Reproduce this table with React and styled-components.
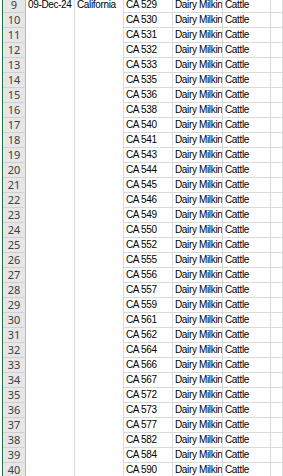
import React from "react";
import styled, { createGlobalStyle } from "styled-components";

const Global = createGlobalStyle`
  html, body { margin: 0; padding: 0; background: #ffffff; }
  body { width: 283px; height: 476px; overflow: hidden; }
`;

const Viewport = styled.div`
  width: 283px;
  height: 476px;
  overflow: hidden;
  display: flex;
  background: #ffffff;
`;

const Gutter = styled.div`
  width: 2px;
  flex: none;
  background: #ffffff;
`;

const SelectBar = styled.div`
  width: 1px;
  flex: none;
  background: #217346;
`;

const Sheet = styled.div`
  flex: 1;
  margin-top: -2px;
  display: grid;
  grid-template-columns: 23px 49px 49px 49px 50px 48px 1fr;
  grid-auto-rows: 15px;
  align-content: start;
`;

const RowHead = styled.div`
  box-sizing: border-box;
  background: #e6e6e6;
  border-right: 1px solid #b9b9b9;
  border-bottom: 1px solid #d0d0d0;
  color: #404040;
  font-family: "Noto Sans", "Open Sans", sans-serif;
  font-size: 11px;
  line-height: 14px;
  text-align: center;
  grid-column: 1;
`;

const Cell = styled.div`
  box-sizing: border-box;
  border-right: 1px solid #dadada;
  border-bottom: ${(p) => (p.$merged ? "none" : "1px solid #dadada")};
  font-family: "Liberation Sans", Arial, sans-serif;
  font-size: 10px;
  letter-spacing: -0.35px;
  line-height: 14px;
  color: #000000;
  padding-left: 2px;
  white-space: nowrap;
  overflow: hidden;
  grid-column: ${(p) => p.$col};
  grid-row: ${(p) => p.$row};
`;

const ids = [
  529, 530, 531, 532, 533, 535, 536, 538, 540, 541, 543, 544, 545, 546, 549,
  550, 552, 555, 556, 557, 559, 561, 562, 564, 566, 567, 572, 573, 577, 582,
  584, 590,
];

export default function App() {
  const span = `1 / span ${ids.length}`;
  return (
    <>
      <Global />
      <Viewport>
        <Gutter />
        <SelectBar />
        <Sheet>
          {ids.map((id, i) => (
            <React.Fragment key={id}>
              <RowHead style={{ gridRow: i + 1 }}>{i + 9}</RowHead>
              <Cell $col={4} $row={i + 1}>CA {id}</Cell>
              <Cell $col={5} $row={i + 1}>Dairy Milking</Cell>
              <Cell $col={6} $row={i + 1}>Cattle</Cell>
              <Cell $col={7} $row={i + 1} />
            </React.Fragment>
          ))}
          <Cell $col={2} $row={span} $merged>
            09-Dec-24
          </Cell>
          <Cell $col={3} $row={span} $merged>
            California
          </Cell>
        </Sheet>
      </Viewport>
    </>
  );
}
